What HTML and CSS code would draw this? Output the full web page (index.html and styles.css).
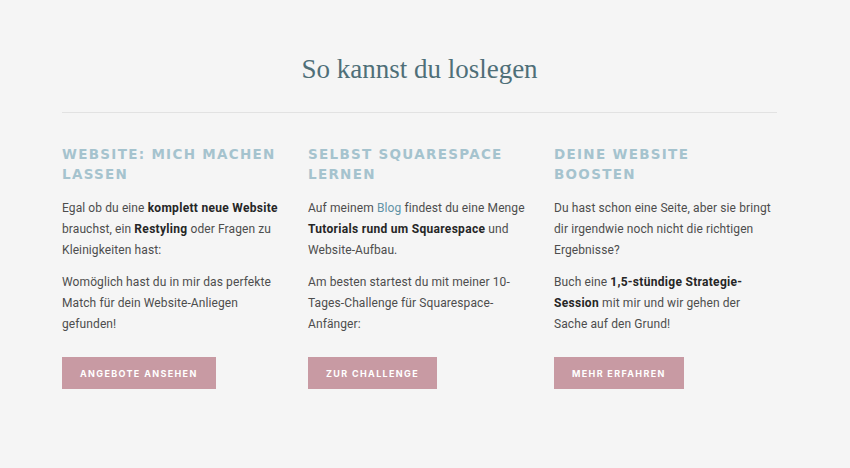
FILE: index.html
```html
<!DOCTYPE html>
<html lang="de">
<head>
<meta charset="utf-8">
<title>So kannst du loslegen</title>
<link rel="stylesheet" href="styles.css">
</head>
<body>
<section class="section">
  <h1 class="title">So kannst du loslegen</h1>
  <hr class="rule">
  <div class="columns">
    <div class="col">
      <h2 class="col-title">Website: mich machen lassen</h2>
      <p>Egal ob du eine <strong>komplett neue Website</strong> brauchst, ein <strong>Restyling</strong> oder Fragen zu Kleinigkeiten hast:</p>
      <p>Womöglich hast du in mir das perfekte Match für dein Website-Anliegen gefunden!</p>
      <a class="btn" href="#">Angebote ansehen</a>
    </div>
    <div class="col">
      <h2 class="col-title">Selbst Squarespace lernen</h2>
      <p>Auf meinem <a class="link" href="#">Blog</a> findest du eine Menge <strong>Tutorials rund um Squarespace</strong> und Website-Aufbau.</p>
      <p>Am besten startest du mit meiner 10-Tages-Challenge für Squarespace-Anfänger:</p>
      <a class="btn" href="#">Zur Challenge</a>
    </div>
    <div class="col">
      <h2 class="col-title">Deine Website boosten</h2>
      <p>Du hast schon eine Seite, aber sie bringt dir irgendwie noch nicht die richtigen Ergebnisse?</p>
      <p>Buch eine <strong>1,5-stündige Strategie-Session</strong> mit mir und wir gehen der<br>Sache auf den Grund!</p>
      <a class="btn" href="#">Mehr erfahren</a>
    </div>
  </div>
</section>
</body>
</html>
```
FILE: styles.css
```css
html, body {
  margin: 0;
  padding: 0;
  background: #f5f5f5;
}
body {
  font-family: "Roboto", "Liberation Sans", sans-serif;
  color: #4d4d4d;
}
.section {
  width: 715px;
  margin: 0 0 0 62px;
  padding-top: 52px;
}
.title {
  margin: 0;
  text-align: center;
  font-family: "Liberation Serif", serif;
  font-weight: normal;
  font-size: 27px;
  line-height: 34px;
  color: #4f6f78;
}
.rule {
  border: 0;
  height: 1px;
  background: #e2e2e2;
  margin: 26px 0 0;
}
.columns {
  display: grid;
  grid-template-columns: repeat(3, 223px);
  column-gap: 23px;
  padding-top: 31px;
}
.col-title {
  margin: 0 0 14px;
  padding-right: 6px;
  font-family: "DejaVu Sans", sans-serif;
  font-weight: bold;
  font-size: 13.5px;
  line-height: 20px;
  letter-spacing: 1.3px;
  text-transform: uppercase;
  color: #a5c3ce;
}
.col p {
  margin: 0 0 11px;
  font-size: 12px;
  line-height: 21px;
  letter-spacing: 0.1px;
}
.col strong {
  color: #262626;
  font-weight: 700;
  letter-spacing: 0.3px;
}
.link {
  color: #5f92a6;
  text-decoration: none;
}
.btn {
  display: inline-block;
  margin-top: 11px;
  padding: 0 18px;
  height: 32px;
  line-height: 33px;
  background: #c89aa3;
  color: #ffffff;
  font-family: "Inter", "Liberation Sans", sans-serif;
  font-size: 9px;
  font-weight: 700;
  letter-spacing: 1.35px;
  text-transform: uppercase;
  text-decoration: none;
}
```
